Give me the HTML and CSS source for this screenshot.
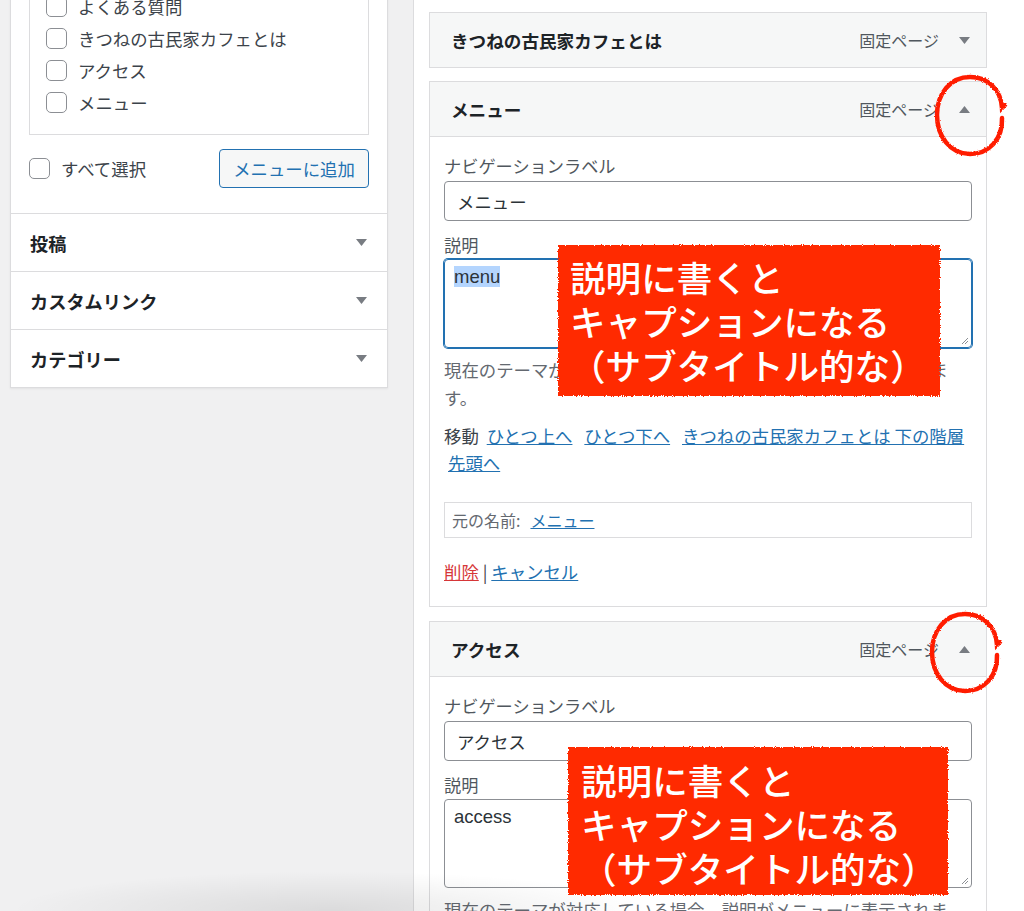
FILE: index.html
```html
<!DOCTYPE html>
<html lang="ja">
<head>
<meta charset="utf-8">
<title>メニュー</title>
<link rel="stylesheet" href="styles.css">
</head>
<body>
<svg class="defs" width="0" height="0" aria-hidden="true">
  <filter id="rough" x="-10%" y="-10%" width="120%" height="120%">
    <feTurbulence type="fractalNoise" baseFrequency="0.9" numOctaves="2" seed="3" result="n"/>
    <feDisplacementMap in="SourceGraphic" in2="n" scale="4" xChannelSelector="R" yChannelSelector="G"/>
  </filter>
  <filter id="rough-ring" x="-30%" y="-30%" width="160%" height="160%">
    <feTurbulence type="fractalNoise" baseFrequency="1.2" numOctaves="2" seed="5" result="n"/>
    <feDisplacementMap in="SourceGraphic" in2="n" scale="2.5" xChannelSelector="R" yChannelSelector="G"/>
  </filter>
</svg>
<div class="page">
  <aside class="sidebar">
    <div class="panel">
      <div class="panel-body">
        <ul class="checklist">
          <li><span class="cb"></span><span>よくある質問</span></li>
          <li><span class="cb"></span><span>きつねの古民家カフェとは</span></li>
          <li><span class="cb"></span><span>アクセス</span></li>
          <li><span class="cb"></span><span>メニュー</span></li>
        </ul>
        <div class="add-row">
          <label class="select-all"><span class="cb"></span><span>すべて選択</span></label>
          <button class="btn-add" type="button">メニューに追加</button>
        </div>
      </div>
      <div class="acc"><h3>投稿</h3><svg class="arrow" viewBox="0 0 11 7"><path d="M0 0h11L5.5 7z"/></svg></div>
      <div class="acc"><h3>カスタムリンク</h3><svg class="arrow" viewBox="0 0 11 7"><path d="M0 0h11L5.5 7z"/></svg></div>
      <div class="acc"><h3>カテゴリー</h3><svg class="arrow" viewBox="0 0 11 7"><path d="M0 0h11L5.5 7z"/></svg></div>
    </div>
  </aside>

  <main class="menu-area">
    <div class="item">
      <div class="item-head">
        <span class="item-title">きつねの古民家カフェとは</span>
        <span class="item-type">固定ページ</span>
        <svg class="arrow" viewBox="0 0 11 7"><path d="M0 0h11L5.5 7z"/></svg>
      </div>
    </div>

    <div class="item open">
      <div class="item-head">
        <span class="item-title">メニュー</span>
        <span class="item-type">固定ページ</span>
        <svg class="arrow" viewBox="0 0 11 7"><path d="M0 7h11L5.5 0z"/></svg>
      </div>
      <div class="item-body">
        <div class="label">ナビゲーションラベル</div>
        <div class="input">メニュー</div>
        <div class="label gap">説明</div>
        <div class="textarea focus"><span class="sel">menu</span>
          <svg class="grip" viewBox="0 0 10 10"><path d="M9 3L3 9M9 6L6 9"/></svg>
        </div>
        <p class="help">現在のテーマが対応している場合、説明がメニューに表示されます。</p>
        <p class="move">移動 <a href="#">ひとつ上へ</a> <a href="#">ひとつ下へ</a> <a href="#">きつねの古民家カフェとは 下の階層</a> <a href="#">先頭へ</a></p>
        <div class="orig">元の名前:<a href="#">メニュー</a></div>
        <p class="actions"><a class="del" href="#">削除</a> | <a href="#">キャンセル</a></p>
      </div>
    </div>

    <div class="item open">
      <div class="item-head">
        <span class="item-title">アクセス</span>
        <span class="item-type">固定ページ</span>
        <svg class="arrow" viewBox="0 0 11 7"><path d="M0 7h11L5.5 0z"/></svg>
      </div>
      <div class="item-body">
        <div class="label">ナビゲーションラベル</div>
        <div class="input">アクセス</div>
        <div class="label gap">説明</div>
        <div class="textarea"><span class="latin">access</span>
          <svg class="grip" viewBox="0 0 10 10"><path d="M9 3L3 9M9 6L6 9"/></svg>
        </div>
        <p class="help">現在のテーマが対応している場合、説明がメニューに表示されます。</p>
      </div>
    </div>
  </main>
</div>

<div class="callout c1">説明に書くと<br>キャプションになる<br>（サブタイトル的な）</div>
<div class="callout c2">説明に書くと<br>キャプションになる<br>（サブタイトル的な）</div>

<svg class="ring r1" viewBox="0 0 80 90"><path d="M72 48 C73 70 58 84 40 84 C20 84 7 66 7 45 C7 23 21 7 40 7 C58 7 71 20 72 38 l3 -3"/></svg>
<svg class="ring r2" viewBox="0 0 80 90"><path d="M72 48 C73 70 58 84 40 84 C20 84 7 66 7 45 C7 23 21 7 40 7 C58 7 71 20 72 38 l3 -3"/></svg>
</body>
</html>
```
FILE: styles.css
```css
* { box-sizing: border-box; }
html, body { margin: 0; height: 911px; overflow: hidden; }
body {
  background: #f0f0f1;
  font-family: "Noto Sans CJK JP", "Noto Sans", sans-serif;
  color: #3c434a;
  position: relative;
}
.defs { position: absolute; }
.page { display: flex; height: 911px; }

/* sidebar */
.sidebar { width: 413px; flex: none; padding: 0 25px 0 10px; }
.panel {
  margin-top: -38px;
  background: #fff;
  border: 1px solid #dcdcde;
  box-shadow: 0 1px 2px rgba(0,0,0,.06);
}
.panel-body { padding: 18px 18px 25px; }
.checklist {
  list-style: none; margin: 0;
  border: 1px solid #dcdcde;
  padding: 8px 16px 16px;
}
.checklist li {
  height: 32px; display: flex; align-items: center; gap: 11px;
  font-size: 17.4px; color: #3c434a;
}
.cb {
  width: 21px; height: 21px; flex: none;
  border: 1px solid #8c8f94; border-radius: 5px; background: #fff;
}
.add-row {
  margin-top: 14px; display: flex; align-items: center; justify-content: space-between;
}
.select-all { display: flex; align-items: center; gap: 11px; font-size: 17.4px; color: #3c434a; }
.btn-add {
  width: 150px; height: 39px;
  border: 1px solid #2271b1; border-radius: 4px;
  background: #f6f7f7; color: #2271b1;
  font-family: inherit; font-size: 17.4px; padding: 0;
}
.acc {
  height: 58px; border-top: 1px solid #dcdcde;
  display: flex; align-items: center; justify-content: space-between;
  padding: 0 20px 0 19px;
}
.acc h3 { margin: 0; font-size: 18.2px; font-weight: 700; color: #1d2327; }
.arrow { width: 11px; height: 7px; fill: #787c82; flex: none; }

/* menu area */
.menu-area {
  flex: 1; background: #fff;
  border-left: 1px solid #dcdcde;
  padding: 12px 0 0 15px;
}
.item { width: 558px; margin-bottom: 13px; }
.item.open { margin-bottom: 14px; }
.item-head {
  height: 56px; border: 1px solid #dcdcde; background: #f6f7f7;
  display: flex; align-items: center; padding: 0 16px 0 21px;
}
.item-title { flex: 1; font-size: 17.6px; font-weight: 700; color: #1d2327; }
.item-type { font-size: 16px; color: #50575e; margin-right: 20px; }
.item-body {
  border: 1px solid #dcdcde; border-top: none;
  padding: 16px 14px 20px;
}
.label { font-size: 17.2px; line-height: 26px; color: #50575e; margin-bottom: 2px; }
.label.gap { margin-top: 11px; margin-bottom: 1px; }
.input {
  height: 40px; border: 1px solid #8c8f94; border-radius: 4px;
  display: flex; align-items: center; padding: 0 12px;
  font-size: 17.4px; color: #2c3338;
}
.textarea {
  position: relative;
  height: 89px; border: 1px solid #8c8f94; border-radius: 4px;
  padding: 6px 9px;
  font-family: "Liberation Sans", Arial, sans-serif; font-size: 18.5px; line-height: 22px; color: #2c3338;
}
.textarea.focus { border-color: #2271b1; box-shadow: 0 0 0 1px #2271b1; }
.sel { background: #b4d5fe; }
.grip { position: absolute; right: 2px; bottom: 2px; width: 10px; height: 10px; stroke: #8c8f94; stroke-width: 1; fill: none; }
.help { margin: 8px 0 0; font-size: 17.4px; line-height: 28px; color: #646970; max-width: 515px; }
.move { margin: 10px 0 0; font-size: 17.4px; line-height: 27px; color: #3c434a; }
.move a { margin: 0 4px; white-space: nowrap; }
a { color: #2271b1; text-decoration: underline; }
.orig {
  margin-top: 26px; height: 36px; border: 1px solid #dcdcde;
  display: flex; align-items: center; padding: 0 7px;
  font-size: 16px; color: #646970;
}
.orig a { margin-left: 10px; }
.actions { margin: 20px 0 0; font-size: 17.4px; line-height: 28px; color: #3c434a; }
.actions a.del { color: #d63638; }

/* overlays */
.callout {
  position: absolute; z-index: 2; isolation: isolate;
  color: #fff; font-size: 35.6px; line-height: 44px; font-weight: 500;
  padding: 10px 12px; white-space: nowrap;
}
.callout::before {
  content: ""; position: absolute; inset: 0; z-index: -1;
  background: #ff2a00; filter: url(#rough);
}
.c1 { left: 558px; top: 245px; width: 382px; height: 151px; }
.c2 { left: 568px; top: 747px; width: 380px; height: 148px; padding-top: 11px; padding-left: 13px; }

.ring {
  position: absolute; z-index: 3; width: 80px; height: 90px;
  fill: none; stroke: #ff1c00; stroke-width: 4.5; stroke-linecap: round;
  filter: url(#rough-ring);
}
.r1 { left: 930px; top: 70px; }
.r2 { left: 925px; top: 607px; }

body::after {
  content: ""; position: absolute; left: 0; bottom: 0; width: 1024px; height: 50px;
  background: radial-gradient(ellipse 320px 40px at 330px 100%, rgba(0,0,0,.09), rgba(0,0,0,0));
  pointer-events: none;
}
```
